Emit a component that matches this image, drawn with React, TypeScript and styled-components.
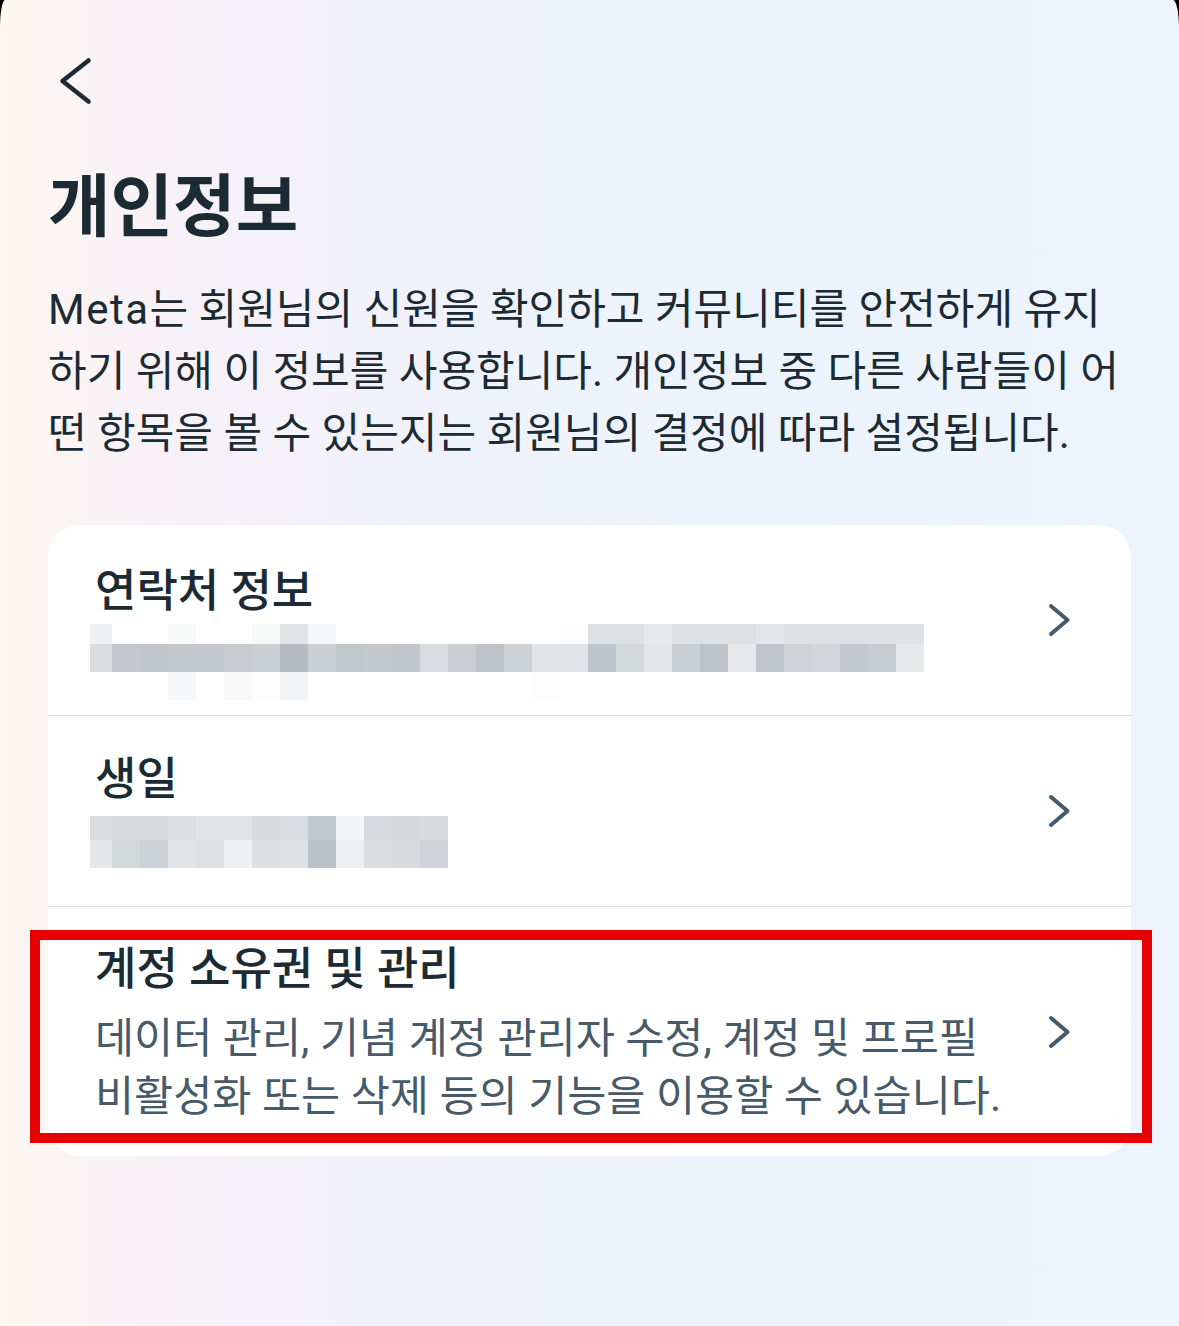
import React from "react";
import styled, { createGlobalStyle } from "styled-components";

const GlobalStyle = createGlobalStyle`
  html, body {
    margin: 0;
    padding: 0;
    background: #000;
  }
  body {
    font-family: Roboto, "Noto Sans CJK KR", "Noto Sans", sans-serif;
    -webkit-font-smoothing: antialiased;
  }
  * { box-sizing: border-box; }
`;

const Screen = styled.main`
  min-height: 1326px;
  padding: 0 48px 48px;
  display: flex;
  flex-direction: column;
  background: linear-gradient(
    90deg,
    #fdf7f2 0%,
    #f9f2f6 10%,
    #f4f1f9 24%,
    #eff2fb 40%,
    #edf3fc 60%,
    #edf4fd 100%
  );
  border-top-left-radius: 5px 28px;
  border-top-right-radius: 6px 28px;
`;

const NavBar = styled.nav`
  padding-top: 56px;
  height: 106px;
  display: flex;
  align-items: flex-start;
`;

const BackButton = styled.button`
  margin: 0 0 0 10px;
  padding: 0;
  border: 0;
  background: none;
  width: 36px;
  height: 50px;
  display: flex;
  cursor: pointer;
`;

const PageTitle = styled.h1`
  margin: 62px 0 0;
  font-size: 68px;
  line-height: 80px;
  font-weight: 700;
  color: #1c2b33;
  letter-spacing: 0;
`;

const Description = styled.p`
  margin: 31px 0 0;
  font-size: 42px;
  line-height: 62px;
  font-weight: 400;
  color: #1c2b33;
  white-space: nowrap;
`;

const Brand = styled.span`
  letter-spacing: 1.5px;
`;

const Card = styled.section`
  margin-top: 60px;
  background: #fff;
  border-radius: 32px;
  display: flex;
  flex-direction: column;
`;

const Row = styled.div<{ $divider?: boolean }>`
  position: relative;
  display: flex;
  align-items: center;
  gap: 24px;
  padding: 0 59px 0 47px;
  border-bottom: ${(p) => (p.$divider ? "1px solid #dfe0e6" : "0")};
  cursor: pointer;
`;

const RowText = styled.div<{ $pt: number; $pb: number }>`
  flex: 1;
  min-width: 0;
  display: flex;
  flex-direction: column;
  padding: ${(p) => p.$pt}px 0 ${(p) => p.$pb}px;
`;

const RowTitle = styled.div`
  font-size: 45px;
  line-height: 56px;
  font-weight: 500;
  color: #1c2b33;
`;

const RowSubtitle = styled.div<{ $mt: number }>`
  margin-top: ${(p) => p.$mt}px;
  font-size: 42.5px;
  line-height: 58px;
  font-weight: 400;
  color: #465a69;
  white-space: nowrap;
`;

const Mosaic = styled.div<{ $cols: number; $rows: string; $mt: number }>`
  margin-top: ${(p) => p.$mt}px;
  margin-left: -5px;
  display: grid;
  grid-template-columns: 22px repeat(${(p) => p.$cols - 1}, 28px);
  grid-template-rows: ${(p) => p.$rows};
  width: max-content;
`;

const Cell = styled.span<{ $bg: string }>`
  display: block;
  background: ${(p) => p.$bg};
`;

const Chevron = styled.svg`
  flex: none;
  width: 24px;
  height: 34px;
`;

const Highlight = styled.div`
  position: absolute;
  top: 23px;
  left: -18px;
  right: -21px;
  bottom: 13px;
  border: 10px solid #e60000;
  pointer-events: none;
`;

const W = "#ffffff";

const contactMosaic: string[][] = [
  [
    "#eeeff1", W, W, "#f7f8f8", W, W, "#f7f8f8", "#e1e4e7", "#f5f6f8", W,
    W, W, W, W, W, W, W, "#fdfdfd", "#dee1e4", "#dee1e4",
    "#e6e9ec", "#dee1e4", "#dee1e4", "#dee1e4", "#e4e7ea", "#dfe2e5", "#dfe2e5", "#dfe2e5", "#dfe2e5", "#dfe2e5",
  ],
  [
    "#d9dde0", "#c4c8ce", "#bfc5ca", "#c3c9cc", "#c4c9cf", "#c8ccd1", "#cbd0d4", "#b5bbc1", "#cbd0d4", "#c1c8cb",
    "#c3c9cc", "#c1c5cc", "#d9dde1", "#cbcfd4", "#bec4ca", "#cdd2d6", "#e2e5e8", "#e2e5e8", "#bdc4cb", "#d3d8db",
    "#e3e6e9", "#cbd0d4", "#bcc3ca", "#e7e8ea", "#c0c4cb", "#cfd3d8", "#d3d7db", "#c4c8cf", "#c8cdd1", "#e7e8ea",
  ],
  [
    W, W, W, "#f6f7f9", W, "#f9f9f9", "#fdfdfd", "#f3f4f6", W, W,
    W, W, W, W, W, W, "#fdfdfd", W, W, W,
    W, W, W, W, W, W, W, W, W, W,
  ],
];

const birthdayMosaic: string[][] = [
  [
    "#dadde0", "#d8dbde", "#d9dcdf", "#dcdfe2", "#e2e5e8", "#e2e5e8", "#d7dbde",
    "#dadde1", "#c2c6cd", "#f3f4f5", "#d6d9de", "#d5d9dc", "#d9dcdf",
  ],
  [
    "#e5e8eb", "#d3d8db", "#ccd1d5", "#e2e5e8", "#dee1e4", "#eff0f2", "#dde0e3",
    "#e0e3e6", "#bbc1c7", "#eeeff1", "#dbdee1", "#d6dadd", "#d0d4d8",
  ],
];

function Redacted({ data, rows, mt }: { data: string[][]; rows: string; mt: number }) {
  return (
    <Mosaic $cols={data[0].length} $rows={rows} $mt={mt} aria-label="가려진 정보">
      {data.flatMap((r, ri) => r.map((c, ci) => <Cell key={`${ri}-${ci}`} $bg={c} />))}
    </Mosaic>
  );
}

function ChevronRight() {
  return (
    <Chevron viewBox="0 0 24 34" fill="none">
      <polyline
        points="3,3 19.5,17 3,31"
        stroke="#465a69"
        strokeWidth="4"
        strokeLinecap="round"
        strokeLinejoin="round"
      />
    </Chevron>
  );
}

export default function App() {
  return (
    <>
      <GlobalStyle />
      <Screen>
        <NavBar>
          <BackButton aria-label="뒤로">
            <svg width="36" height="50" viewBox="0 0 36 50" fill="none">
              <polyline
                points="30.5,4.5 4.5,25 30.5,45.5"
                stroke="#1c2b33"
                strokeWidth="4.5"
                strokeLinecap="round"
                strokeLinejoin="round"
              />
            </svg>
          </BackButton>
        </NavBar>

        <PageTitle>개인정보</PageTitle>
        <Description>
          <Brand>Meta</Brand>는 회원님의 신원을 확인하고 커뮤니티를 안전하게 유지
          <br />
          하기 위해 이 정보를 사용합니다. 개인정보 중 다른 사람들이 어
          <br />
          떤 항목을 볼 수 있는지는 회원님의 결정에 따라 설정됩니다.
        </Description>

        <Card>
          <Row $divider>
            <RowText $pt={39} $pb={15}>
              <RowTitle>연락처 정보</RowTitle>
              <Redacted data={contactMosaic} rows="20px 28px 28px" mt={4} />
            </RowText>
            <ChevronRight />
          </Row>

          <Row $divider>
            <RowText $pt={36} $pb={38}>
              <RowTitle>생일</RowTitle>
              <Redacted data={birthdayMosaic} rows="24px 28px" mt={8} />
            </RowText>
            <ChevronRight />
          </Row>

          <Row>
            <RowText $pt={35} $pb={30}>
              <RowTitle>계정 소유권 및 관리</RowTitle>
              <RowSubtitle $mt={12}>
                데이터 관리, 기념 계정 관리자 수정, 계정 및 프로필
                <br />
                비활성화 또는 삭제 등의 기능을 이용할 수 있습니다.
              </RowSubtitle>
            </RowText>
            <ChevronRight />
            <Highlight />
          </Row>
        </Card>
      </Screen>
    </>
  );
}
